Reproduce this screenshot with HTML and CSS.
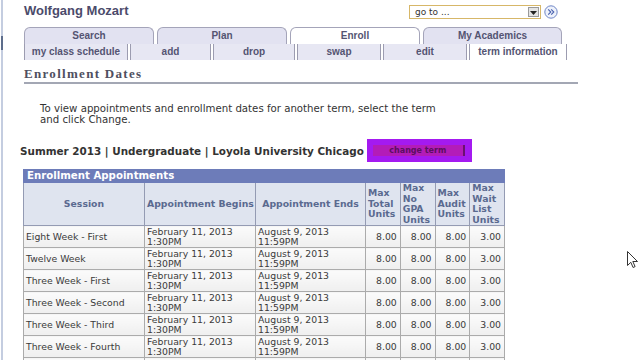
FILE: index.html
```html
<!DOCTYPE html>
<html>
<head>
<meta charset="utf-8">
<link rel="stylesheet" href="styles.css">
</head>
<body>
<div class="frame-edge"></div>
<div class="page">
  <div class="header">
    <div class="name">Wolfgang Mozart</div>
    <div class="goto">
      <div class="select"><span>go to ...</span><span class="drop"><svg width="9" height="7" viewBox="0 0 9 7"><path d="M1 2h7L4.5 6z" fill="#222"/></svg></span></div>
      <span class="go"><svg width="14" height="14" viewBox="0 0 14 14"><circle cx="7" cy="7" r="6.2" fill="#eef2fb" stroke="#6f86c6" stroke-width="1"/><path d="M4.2 4.3l2.6 2.7-2.6 2.7M7.2 4.3l2.6 2.7-2.6 2.7" fill="none" stroke="#4a62b0" stroke-width="1.1"/></svg></span>
    </div>
  </div>
  <div class="tabs">
    <div class="tab">Search</div>
    <div class="tab">Plan</div>
    <div class="tab active">Enroll</div>
    <div class="tab">My Academics</div>
  </div>
  <div class="subtabs">
    <div class="sub w1">my class schedule</div>
    <div class="sub w2">add</div>
    <div class="sub w3">drop</div>
    <div class="sub w4">swap</div>
    <div class="sub w5">edit</div>
    <div class="sub w6 active">term information</div>
  </div>
  <h1 class="title">Enrollment Dates</h1>
  <p class="intro">To view appointments and enrollment dates for another term, select the term<br>and click Change.</p>
  <div class="termline">
    <span class="term">Summer 2013 | Undergraduate | Loyola University Chicago</span>
    <span class="btnbox"><span class="btn">change term</span></span>
  </div>
  <table class="grid">
    <colgroup>
      <col class="c1"><col class="c2"><col class="c3"><col class="cn"><col class="cn"><col class="cn"><col class="cn">
    </colgroup>
    <tr><th class="caption" colspan="7">Enrollment Appointments</th></tr>
    <tr class="head">
      <th class="ctr">Session</th>
      <th class="ctr">Appointment Begins</th>
      <th class="ctr">Appointment Ends</th>
      <th>Max<br>Total<br>Units</th>
      <th>Max<br>No<br>GPA<br>Units</th>
      <th>Max<br>Audit<br>Units</th>
      <th>Max<br>Wait<br>List<br>Units</th>
    </tr>
    <tr><td>Eight Week - First</td><td>February 11, 2013<br>1:30PM</td><td>August 9, 2013<br>11:59PM</td><td class="n">8.00</td><td class="n">8.00</td><td class="n">8.00</td><td class="n">3.00</td></tr>
    <tr><td>Twelve Week</td><td>February 11, 2013<br>1:30PM</td><td>August 9, 2013<br>11:59PM</td><td class="n">8.00</td><td class="n">8.00</td><td class="n">8.00</td><td class="n">3.00</td></tr>
    <tr><td>Three Week - First</td><td>February 11, 2013<br>1:30PM</td><td>August 9, 2013<br>11:59PM</td><td class="n">8.00</td><td class="n">8.00</td><td class="n">8.00</td><td class="n">3.00</td></tr>
    <tr><td>Three Week - Second</td><td>February 11, 2013<br>1:30PM</td><td>August 9, 2013<br>11:59PM</td><td class="n">8.00</td><td class="n">8.00</td><td class="n">8.00</td><td class="n">3.00</td></tr>
    <tr><td>Three Week - Third</td><td>February 11, 2013<br>1:30PM</td><td>August 9, 2013<br>11:59PM</td><td class="n">8.00</td><td class="n">8.00</td><td class="n">8.00</td><td class="n">3.00</td></tr>
    <tr><td>Three Week - Fourth</td><td>February 11, 2013<br>1:30PM</td><td>August 9, 2013<br>11:59PM</td><td class="n">8.00</td><td class="n">8.00</td><td class="n">8.00</td><td class="n">3.00</td></tr>
    <tr><td>Three Week - Fifth</td><td>February 11, 2013<br>1:30PM</td><td>August 9, 2013<br>11:59PM</td><td class="n">8.00</td><td class="n">8.00</td><td class="n">8.00</td><td class="n">3.00</td></tr>
  </table>
</div>
<svg class="cursor" width="12" height="18" viewBox="0 0 12 18"><path d="M0.5 0.5v14l3.3-3.2 2.3 5.2 2-0.9-2.3-5.1h4.7z" fill="#fff" stroke="#333" stroke-width="1"/></svg>
</body>
</html>
```
FILE: styles.css
```css
html, body {
  margin: 0;
  padding: 0;
  background: #fff;
  overflow: hidden;
  height: 360px;
}
body {
  font-family: "DejaVu Sans", Verdana, sans-serif;
  color: #333;
  position: relative;
}
.frame-edge {
  position: absolute;
  left: 1px;
  top: 0;
  width: 2px;
  height: 360px;
  background: linear-gradient(#c4cde0 0, #c4cde0 36px, #5d6d8c 36px, #5d6d8c 50px, #c4cde0 50px);
}
.page {
  width: 554px;
  padding-left: 24px;
}
.header {
  display: flex;
  align-items: flex-start;
  justify-content: space-between;
  height: 27px;
}
.name {
  font-family: "Liberation Sans", Arial, sans-serif;
  font-weight: bold;
  font-size: 13px;
  color: #4b4b6b;
  margin-top: 3px;
}
.goto {
  display: flex;
  align-items: center;
  margin-top: 5px;
  margin-right: 20px;
}
.select {
  width: 125px;
  height: 12px;
  border: 1px solid #d7b768;
  display: flex;
  align-items: center;
  justify-content: space-between;
  font-size: 9px;
  color: #333;
  padding-left: 5px;
  box-sizing: content-box;
}
.drop {
  width: 11px;
  height: 10px;
  margin-right: 1px;
  background: #e4e4e4;
  border: 1px solid #9a9a9a;
  display: flex;
  align-items: center;
  justify-content: center;
  box-sizing: border-box;
}
.go { margin-left: 3px; display: flex; }
.tabs {
  display: grid;
  grid-template-columns: 130px 130px 130px 139px;
  column-gap: 3px;
  height: 17px;
}
.tab {
  background: #e2e2f1;
  border: 1px solid #a4a4b9;
  border-bottom: none;
  border-radius: 6px 6px 0 0;
  font-family: "Liberation Sans", Arial, sans-serif;
  font-weight: bold;
  font-size: 10px;
  color: #545472;
  text-align: center;
  line-height: 16px;
}
.tab.active { background: #fff; }
.subtabs {
  display: flex;
  column-gap: 2px;
  height: 16px;
  margin-bottom: 7px;
}
.sub {
  background: #e7e7f3;
  border-left: 1px solid #9c9cb0;
  border-right: 1px solid #9c9cb0;
  font-family: "Liberation Sans", Arial, sans-serif;
  font-weight: bold;
  font-size: 10px;
  color: #545472;
  text-align: center;
  line-height: 16px;
  box-sizing: border-box;
}
.sub.active { background: #fff; }
.w1 { width: 104px; }
.w2 { width: 81px; }
.w3 { width: 82px; }
.w4 { width: 84px; }
.w5 { width: 84px; }
.w6 { width: 98px; }
.title {
  margin: 0;
  font-family: "Liberation Serif", "Times New Roman", serif;
  font-weight: bold;
  font-size: 13px;
  letter-spacing: 1.3px;
  color: #4f4f60;
  line-height: 14px;
  padding-bottom: 1px;
  border-bottom: 2px solid #a3a7b4;
}
.intro {
  margin: 19px 0 0 16px;
  font-size: 10.2px;
  line-height: 11px;
  color: #333;
}
.termline {
  display: flex;
  align-items: center;
  margin: 14px 0 0 -4px;
  height: 23px;
}
.term {
  font-weight: bold;
  font-size: 10.4px;
  color: #333;
}
.btnbox {
  margin-left: 3px;
  width: 105px;
  height: 23px;
  background: #a41af0;
  display: flex;
  align-items: center;
  padding-left: 6px;
  box-sizing: border-box;
}
.btn {
  width: 92px;
  height: 11px;
  background: #b31cb8;
  border-right: 2px solid #6a1070;
  font-size: 8px;
  font-weight: bold;
  color: #5a1060;
  text-align: center;
  line-height: 11px;
  box-sizing: border-box;
}
.grid {
  margin-top: 7px;
  margin-left: -1px;
  border-collapse: collapse;
  width: 481px;
  table-layout: fixed;
  font-size: 9.3px;
}
.c1 { width: 121px; }
.c2 { width: 111px; }
.c3 { width: 110px; }
.cn { width: 34.75px; }
.grid th.caption {
  background: #6d7cb9;
  color: #fff;
  text-align: left;
  font-size: 10.2px;
  height: 12px;
  line-height: 12px;
  padding: 0 3px;
  border: 1px solid #6d7cb9;
}
.grid tr.head th {
  background: #dfe4ef;
  color: #5a6a90;
  font-weight: bold;
  font-size: 9.3px;
  line-height: 10.5px;
  border: 1px solid #949bb3;
  height: 42px;
  padding: 0 2px;
  text-align: left;
  white-space: nowrap;
  overflow: hidden;
}
.grid tr.head th.ctr { text-align: center; }
.grid td {
  background: linear-gradient(#fbfbfb, #efefef);
  border: 1px solid #ababab;
  height: 21px;
  line-height: 10px;
  padding: 0 2px;
  color: #3a3a3a;
  white-space: nowrap;
  overflow: hidden;
}
.grid td.n { text-align: right; padding-right: 3px; }
.cursor {
  position: absolute;
  left: 627px;
  top: 251px;
}
```
